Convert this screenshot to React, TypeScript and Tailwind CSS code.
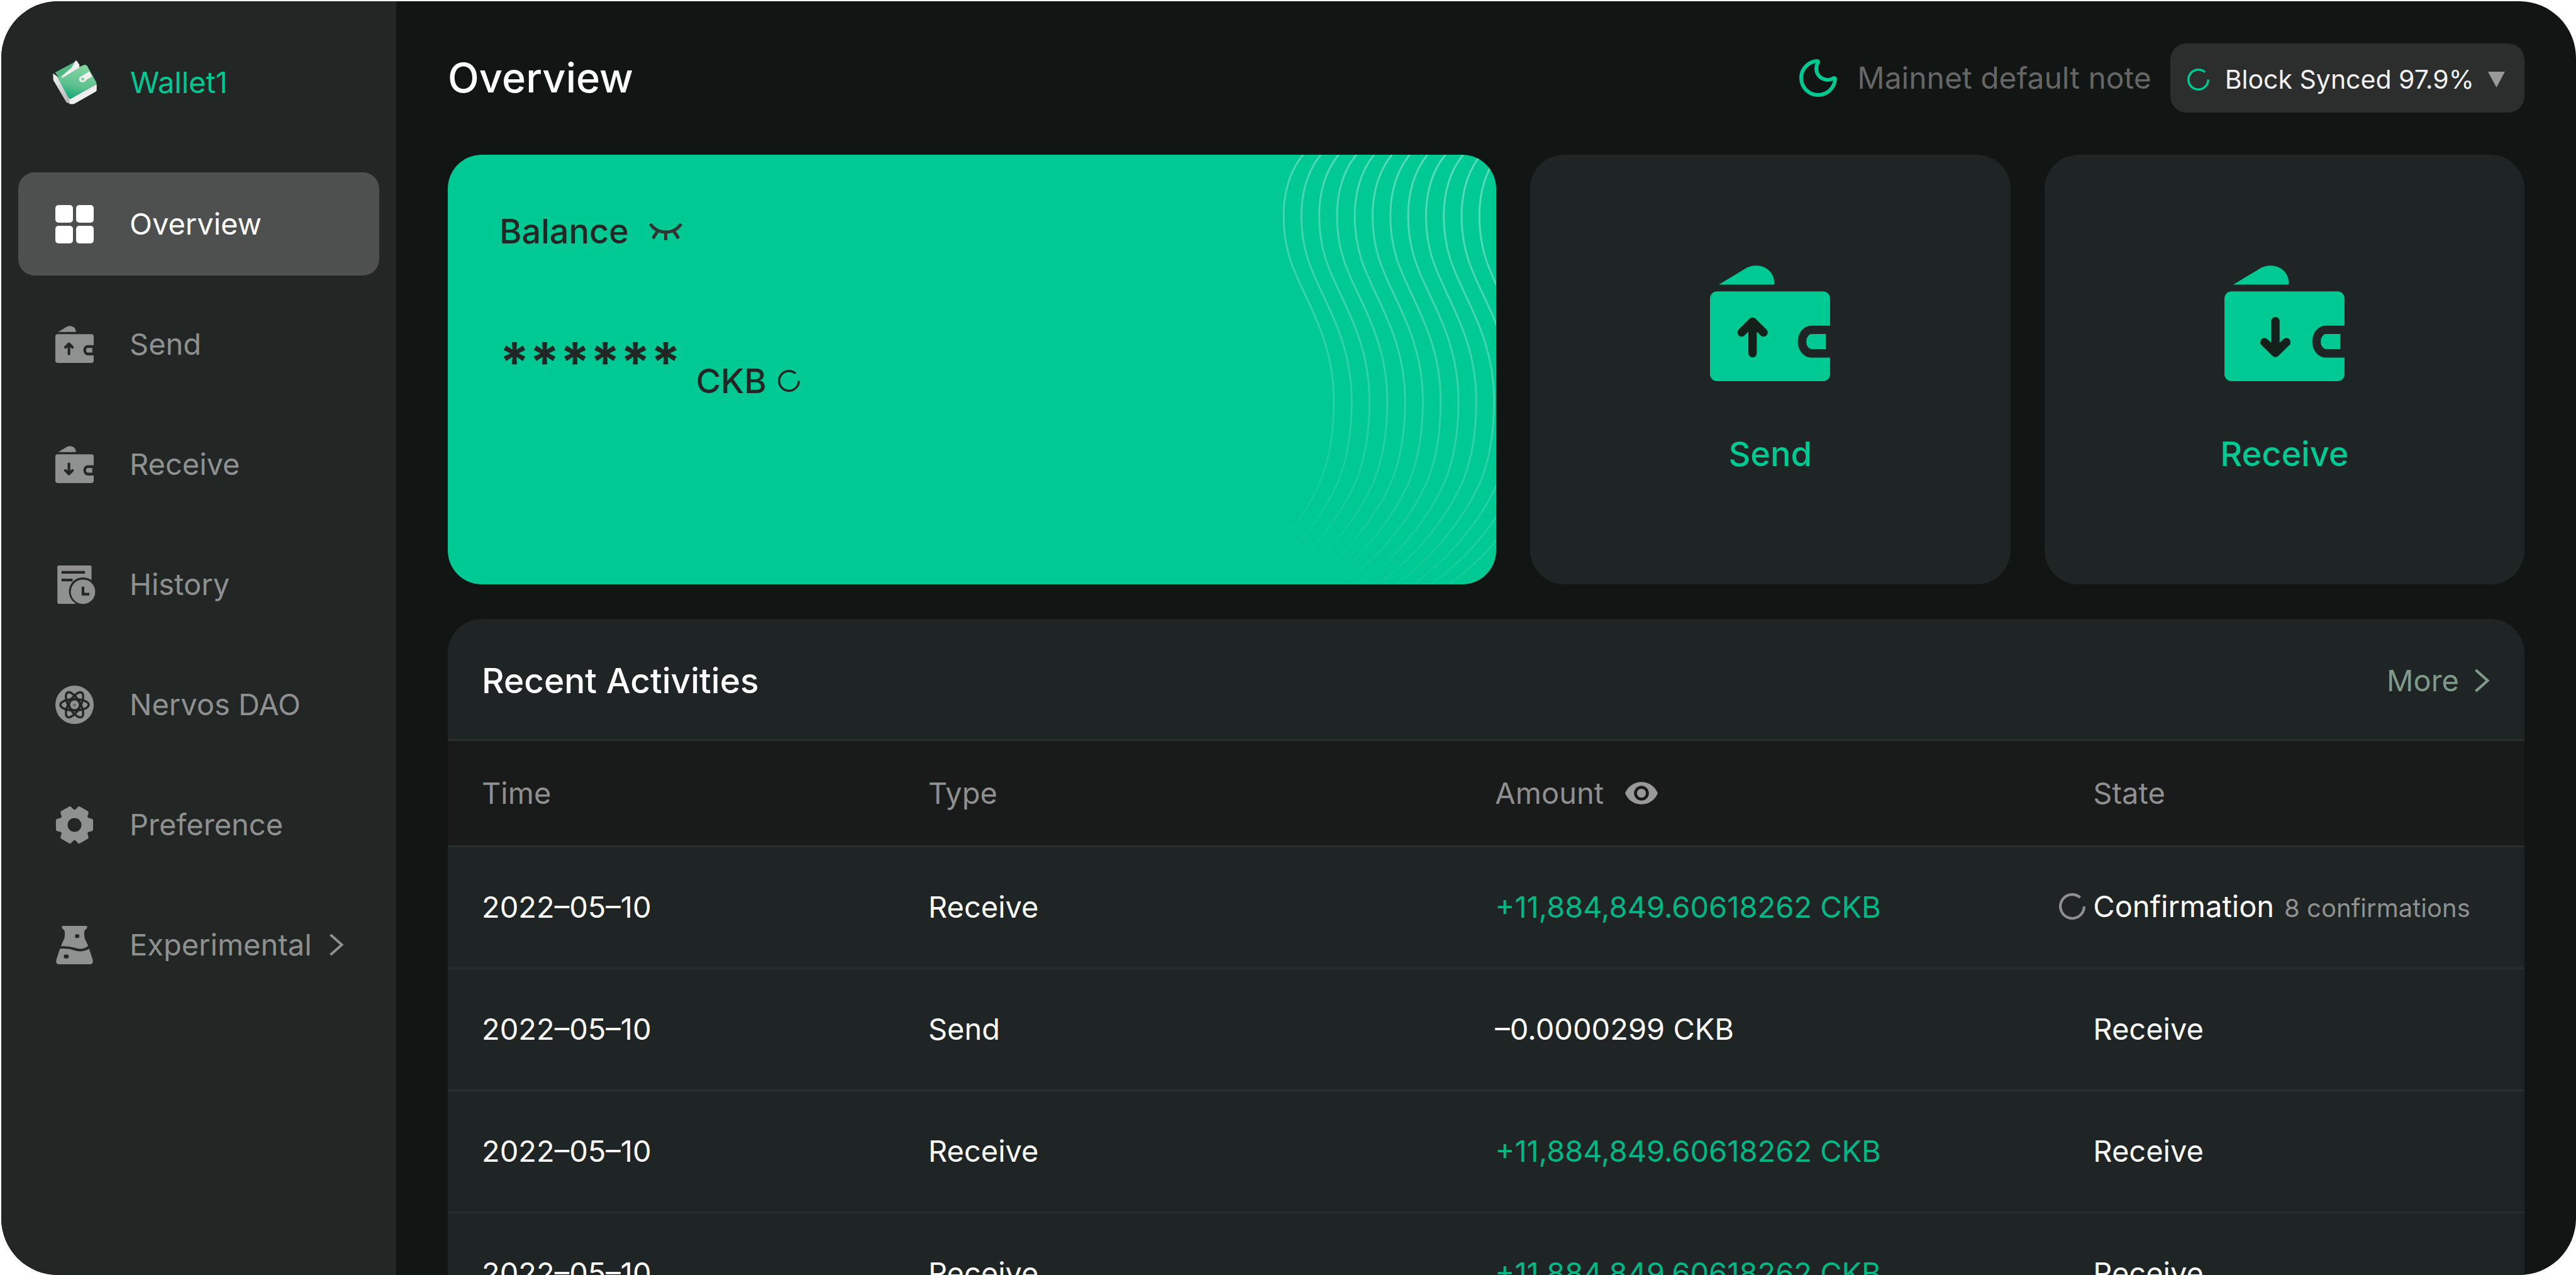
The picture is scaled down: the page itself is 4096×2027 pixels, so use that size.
import React from "react";

const LABEL = "text-[47px] leading-[56px]";

function WalletLogo() {
  return (
    <svg viewBox="73 30 256 256" className="h-[70px] w-[70px] shrink-0" aria-hidden="true">
      <defs>
        <linearGradient id="logoFace" x1="0.6" y1="0" x2="0.35" y2="1">
          <stop offset="0" stopColor="#84d6a2" />
          <stop offset="0.6" stopColor="#5fc18f" />
          <stop offset="1" stopColor="#0fa878" />
        </linearGradient>
        <linearGradient id="logoSide" x1="0" y1="0" x2="0.6" y2="1">
          <stop offset="0" stopColor="#f4f4f4" />
          <stop offset="1" stopColor="#b9bbba" />
        </linearGradient>
      </defs>
      <path d="M74 106 L100 124 L176 250 L176 284 L152 274 L76 145 Z" fill="url(#logoSide)" />
      <path d="M170 256 L328 168 L328 204 Q328 208 322 212 L200 281 Q186 286 172 283 Z" fill="#eeefee" />
      <path d="M86 100 L205 36 L190 90 L112 134 Z" fill="#4fb983" />
      <path d="M100 130 L224 68 L258 56 Q272 56 277 70 L327 160 Q328 168 320 173 L176 254 Q168 254 162 245 Z" fill="url(#logoFace)" />
      <path d="M205 32 Q212 28 216 38 L228 56 L226 72 L128 132 L124 122 L182 72 Z" fill="#eeefee" />
      <path d="M232 126 L286 94 L302 124 L268 142 Q262 156 246 157 Q224 156 226 134 Z" fill="#eeefee" />
      <circle cx="247" cy="139" r="9" fill="#7fcf9f" />
    </svg>
  );
}

const ARROW_UP = "";
const ARROW_DOWN = "matrix(1 0 0 -1 0 854)";
const ARROW_DOWN_CENTERED = "matrix(1 0 0 -1 50 854)";

function WalletArrow({ transform, arrow, className }: { transform: string; arrow: string; className: string }) {
  return (
    <svg viewBox="0 0 714 688" className={className} fill="currentColor" aria-hidden="true">
      <path d="M52 114 L218 14 C300 -24 382 26 382 104 V114 Z" />
      <path d="M42 154 H672 A42 42 0 0 1 714 196 V358 H600 A78 95 0 0 0 600 548 H714 V646 A42 42 0 0 1 672 688 H42 A42 42 0 0 1 0 646 V196 A42 42 0 0 1 42 154 Z" />
      <path d="M606 408 H688 V497 H606 A34 44.500 0 0 1 606 408 Z" />
      <g transform={transform || undefined} stroke={arrow} fill={arrow} strokeLinecap="round" strokeLinejoin="round">
        <path d="M188 398 L253 334 L318 398" strokeWidth="50" fill="none" />
        <path d="M253 340 V522" strokeWidth="50" />
        <path d="M253 345 L222 385 H284 Z" strokeWidth="14" />
      </g>
    </svg>
  );
}

const NAV_ICON = "h-[61px] w-[61px] shrink-0 overflow-visible";

function GridIcon() {
  return (
    <svg viewBox="0 0 61 61" className={NAV_ICON} fill="currentColor" aria-hidden="true">
      <rect width="28" height="28" rx="5" />
      <rect x="33" width="28" height="28" rx="5" />
      <rect y="33" width="28" height="28" rx="5" />
      <rect x="33" y="33" width="28" height="28" rx="5" />
    </svg>
  );
}

function HistoryIcon() {
  return (
    <svg viewBox="87 81 229 229" className={NAV_ICON} fill="currentColor" aria-hidden="true">
      <rect x="99" y="81" width="204" height="229" rx="8" />
      <path d="M124 122 H264 M124 168 H190" stroke="#222625" strokeWidth="16" />
      <circle cx="252" cy="236" r="84" fill="#222625" />
      <path d="M302 300 h40 v30 h-140 v-20 z" fill="#222625" />
      <circle cx="252" cy="238" r="73" />
      <path d="M252 208 V252 H290" stroke="#222625" strokeWidth="16" fill="none" />
    </svg>
  );
}

function DaoIcon() {
  return (
    <svg viewBox="0 0 228 228" className={NAV_ICON} fill="currentColor" aria-hidden="true">
      <circle cx="114" cy="114" r="114" />
      <g fill="none" stroke="#222625" strokeWidth="13">
        <ellipse cx="114" cy="114" rx="84" ry="34" />
        <ellipse cx="114" cy="114" rx="84" ry="34" transform="rotate(60 114 114)" />
        <ellipse cx="114" cy="114" rx="84" ry="34" transform="rotate(120 114 114)" />
      </g>
      <circle cx="114" cy="114" r="34" fill="#222625" />
      <circle cx="114" cy="114" r="26" />
      <circle cx="114" cy="116" r="9" fill="#222625" opacity="0.35" />
    </svg>
  );
}

function gearPath() {
  const points: string[] = [];
  for (let i = 0; i < 6; i++) {
    for (const [offset, radius] of [[-15, 28], [15, 28], [24, 22], [36, 22]]) {
      const a = ((i * 60 + offset) * Math.PI) / 180;
      points.push(`${(30.5 + radius * Math.cos(a)).toFixed(2)} ${(30.5 + radius * Math.sin(a)).toFixed(2)}`);
    }
  }
  return `M${points.join("L")}Z`;
}

function GearIcon() {
  return (
    <svg viewBox="0 0 61 61" className={NAV_ICON} fill="currentColor" aria-hidden="true">
      <path d={gearPath()} stroke="currentColor" strokeWidth="5" strokeLinejoin="round" />
      <circle cx="30.5" cy="30.5" r="11" fill="#222625" />
    </svg>
  );
}

function FlaskIcon() {
  return (
    <svg viewBox="0 0 76 79" className={NAV_ICON} fill="currentColor" aria-hidden="true">
      <path d="M14 0 H62 Q64 0 64 2 V4 Q64 6 61 7 Q58 9 58 14 V20 Q58 26 62 32 L66 41 Q56 50 42 46 Q24 41 10 42 L14 32 Q18 26 18 20 V14 Q18 9 15 7 Q12 6 12 4 V2 Q12 0 14 0 Z" />
      <path d="M8 47 Q24 45 40 51 Q56 55 68 47 L75 68 Q78 79 70 79 H6 Q-2 79 1 68 Z" />
      <rect x="39" y="17" width="9" height="8" rx="3" fill="#222625" />
      <rect x="16" y="59" width="10" height="8" rx="3" fill="#222625" />
    </svg>
  );
}

function Chevron({ className }: { className: string }) {
  return (
    <svg viewBox="0 0 24 36" className={className} fill="none" stroke="currentColor" aria-hidden="true">
      <path d="M3 2 L21 18 L3 34" strokeWidth="4" />
    </svg>
  );
}

function Spinner({ className }: { className: string }) {
  return (
    <svg viewBox="0 0 40 40" className={className} fill="none" stroke="currentColor" strokeWidth="4" aria-hidden="true">
      <path d="M38 20 A18 18 0 1 1 32 6.600" />
    </svg>
  );
}

function ClosedEye() {
  return (
    <svg viewBox="0 0 53 27" className="h-[27px] w-[53px]" fill="none" stroke="#303432" strokeWidth="5" aria-hidden="true">
      <path d="M2 1 C8 10 16 14 26.500 14 S45 10 51 1 M14 12 L6 24 M26.500 14 V27 M39 12 L47 24" />
    </svg>
  );
}

function Waves() {
  return (
    <svg viewBox="0 0 420 683" className="pointer-events-none absolute right-0 top-0 h-full" preserveAspectRatio="xMaxYMid meet" aria-hidden="true">
      <defs>
        <linearGradient id="waveFade" gradientUnits="userSpaceOnUse" x1="90" y1="640" x2="420" y2="90">
          <stop offset="0" stopColor="#fff" stopOpacity="0" />
          <stop offset="0.45" stopColor="#fff" stopOpacity="0.17" />
          <stop offset="1" stopColor="#fff" stopOpacity="0.34" />
        </linearGradient>
        <mask id="waveMask" maskUnits="userSpaceOnUse" x="0" y="0" width="420" height="683" style={{ maskType: "alpha" }}>
          <rect width="420" height="683" fill="url(#waveFade)" />
        </mask>
      </defs>
      <g mask="url(#waveMask)" fill="none" stroke="#fff" strokeWidth="3">
        {Array.from({ length: 13 }, (_, n) => (
          <path
            key={n}
            transform={`translate(${13 + 28.3 * n} 0)`}
            d="M100 0 C79 25 69 60 69 97 C69 150 84 182 103 222 C125 268 149 320 149 390 C149 440 142 488 124 527 C105 568 60 635 -8 683"
          />
        ))}
      </g>
    </svg>
  );
}

const NAV = [
  { label: "Overview", icon: <GridIcon />, active: true },
  { label: "Send", icon: <WalletArrow transform={ARROW_UP} arrow="#222625" className={NAV_ICON} /> },
  { label: "Receive", icon: <WalletArrow transform={ARROW_DOWN} arrow="#222625" className={NAV_ICON} /> },
  { label: "History", icon: <HistoryIcon /> },
  { label: "Nervos DAO", icon: <DaoIcon /> },
  { label: "Preference", icon: <GearIcon /> },
  { label: "Experimental", icon: <FlaskIcon />, more: true },
];

function Sidebar() {
  return (
    <aside className="flex w-[628px] shrink-0 flex-col bg-[#222625]">
      <a href="#wallet" className={`flex h-[258px] items-center gap-[53px] pl-[82px] text-[#00c891] ${LABEL}`}>
        <WalletLogo />
        Wallet1
      </a>
      <nav className="flex flex-col gap-[27px] px-[27px] pt-[14px]">
        {NAV.map((item) => (
          <a
            key={item.label}
            href={`#${item.label}`}
            className={`flex h-[164px] items-center rounded-[26px] pl-[59px] ${LABEL} ${
              item.active ? "bg-[#4d504f] text-white" : "text-[#8f9190]"
            }`}
          >
            {item.icon}
            <span className="ml-[57px]">{item.label}</span>
            {item.more && <Chevron className="ml-[26px] h-[36px] w-[25px]" />}
          </a>
        ))}
      </nav>
    </aside>
  );
}

const ROWS = [
  { time: "2022–05–10", type: "Receive", amount: "+11,884,849.60618262 CKB", state: "Confirmation", note: "8 confirmations" },
  { time: "2022–05–10", type: "Send", amount: "–0.0000299 CKB", state: "Receive" },
  { time: "2022–05–10", type: "Receive", amount: "+11,884,849.60618262 CKB", state: "Receive" },
  { time: "2022–05–10", type: "Receive", amount: "+11,884,849.60618262 CKB", state: "Receive" },
];

function Activities() {
  return (
    <section className="shrink-0 overflow-hidden rounded-t-[54px] bg-[#1f2424]">
      <div className="flex h-[194px] items-center justify-between border-b-[3px] border-[#292e2e] px-[54px] pt-[4px]">
        <h2 className="text-[55px] font-medium leading-[64px] text-white">Recent Activities</h2>
        <a href="#history" className={`flex items-center gap-[22px] text-[#809a8a] ${LABEL}`}>
          More
          <Chevron className="h-[38px] w-[28px]" />
        </a>
      </div>
      <table className={`w-full table-fixed border-collapse text-left ${LABEL}`}>
        <colgroup>
          <col className="w-[21.5%]" />
          <col className="w-[27.3%]" />
          <col className="w-[28.8%]" />
          <col />
        </colgroup>
        <thead className="bg-[#181b1a] text-[#8f8f8f]">
          <tr className="h-[167px] border-b-[3px] border-[#292e2e]">
            <th className="px-[54px] font-normal">Time</th>
            <th className="px-[54px] font-normal">Type</th>
            <th className="px-[54px] font-normal">
              <span className="flex items-center gap-[34px]">
                Amount
                <button type="button" aria-label="Toggle amounts">
                  <svg viewBox="1 4.500 22 15" className="h-[36px] w-[52px]" fill="#999999" aria-hidden="true">
                    <path d="M12 4.500C7 4.500 2.730 7.610 1 12c1.730 4.390 6 7.500 11 7.500s9.270-3.110 11-7.500c-1.730-4.390-6-7.500-11-7.500zM12 17c-2.760 0-5-2.240-5-5s2.240-5 5-5 5 2.240 5 5-2.240 5-5 5zm0-8c-1.660 0-3 1.340-3 3s1.340 3 3 3 3-1.340 3-3-1.340-3-3-3z" />
                  </svg>
                </button>
              </span>
            </th>
            <th className="px-[54px] font-normal">State</th>
          </tr>
        </thead>
        <tbody className="text-white">
          {ROWS.map((row, i) => (
            <tr key={i} className="h-[194px] border-b-[3px] border-[#292e2e]">
              <td className="px-[54px]">{row.time}</td>
              <td className="px-[54px]">{row.type}</td>
              <td className={`whitespace-nowrap px-[54px] ${row.amount.startsWith("+") ? "text-[#00b886]" : ""}`}>{row.amount}</td>
              <td className="whitespace-nowrap px-[54px]">
                <span className="relative flex items-baseline gap-[16px]">
                  {row.note && <Spinner className="absolute right-full top-[7px] mr-[12px] h-[42px] w-[42px] text-[#8f9190]" />}
                  {row.state}
                  {row.note && <span className="text-[40px] text-[#8f9190]">{row.note}</span>}
                </span>
              </td>
            </tr>
          ))}
        </tbody>
      </table>
    </section>
  );
}

export default function App() {
  return (
    <div className="h-screen overflow-hidden bg-white pl-[2px] pt-[2px] font-['Inter','Liberation_Sans',sans-serif]">
      <div className="flex h-full overflow-hidden rounded-[90px] bg-[#111514]">
        <Sidebar />
        <main className="flex min-w-0 flex-1 flex-col pl-[82px] pr-[82px]">
          <header className="flex h-[244px] shrink-0 items-center">
            <h1 className="text-[65px] font-medium leading-[76px] text-white">Overview</h1>
            <button type="button" aria-label="Dark theme" className="ml-auto text-[#00c891]">
              <svg viewBox="2 2 20 20" className="h-[60px] w-[60px]" fill="none" stroke="currentColor" strokeWidth="2" strokeLinejoin="round" aria-hidden="true">
                <path d="M20.985 12.486a9 9 0 1 1-9.473-9.472c.405-.022.617.46.402.803a6 6 0 0 0 8.268 8.268c.344-.215.825-.004.803.401" />
              </svg>
            </button>
            <span className="ml-[32px] text-[48px] leading-[56px] text-[#666666]">Mainnet default note</span>
            <button type="button" className="ml-[30px] flex h-[110px] items-center rounded-[26px] bg-[#2b2e2d] pl-[27px] pr-[31px] pt-[4px] text-[41px] leading-[52px] text-[#f2f2f2]">
              <Spinner className="h-[35px] w-[35px] text-[#00c891]" />
              <span className="ml-[25px]">Block Synced 97.9%</span>
              <svg viewBox="0 0 27 25" className="ml-[22px] h-[25px] w-[27px]" fill="#999999" aria-hidden="true">
                <path d="M0 0 H27 L13.500 25 Z" />
              </svg>
            </button>
          </header>
          <div className="mb-[55px] grid h-[683px] shrink-0 grid-cols-[1666fr_764fr_763fr] gap-[54px]">
            <section className="relative overflow-hidden rounded-[54px] bg-[#00c993] px-[82px] pt-[90px] text-[#222625]">
              <Waves />
              <div className="flex items-center gap-[32px] text-[54px] leading-[64px]">
                <h2 className="font-medium">Balance</h2>
                <button type="button" aria-label="Show balance">
                  <ClosedEye />
                </button>
              </div>
              <div className="mt-[126px] flex items-start text-[54px] font-medium leading-[64px]">
                <span className="text-[86px] font-bold leading-[100px]">******</span>
                <span className="ml-[24px] mt-[48px]">CKB</span>
                <Spinner className="ml-[18px] mt-[62px] h-[35px] w-[35px]" />
              </div>
            </section>
            <button type="button" className="flex flex-col items-center rounded-[54px] bg-[#1f2424] pt-[176px] text-[54px] font-medium leading-[64px] text-[#00c993]">
              <WalletArrow transform={ARROW_UP} arrow="#14211a" className="h-[184px] w-[191px]" />
              <span className="mt-[84px]">Send</span>
            </button>
            <button type="button" className="flex flex-col items-center rounded-[54px] bg-[#1f2424] pt-[176px] text-[54px] font-medium leading-[64px] text-[#00c993]">
              <WalletArrow transform={ARROW_DOWN_CENTERED} arrow="#14211a" className="h-[184px] w-[191px]" />
              <span className="mt-[84px]">Receive</span>
            </button>
          </div>
          <Activities />
        </main>
      </div>
    </div>
  );
}
